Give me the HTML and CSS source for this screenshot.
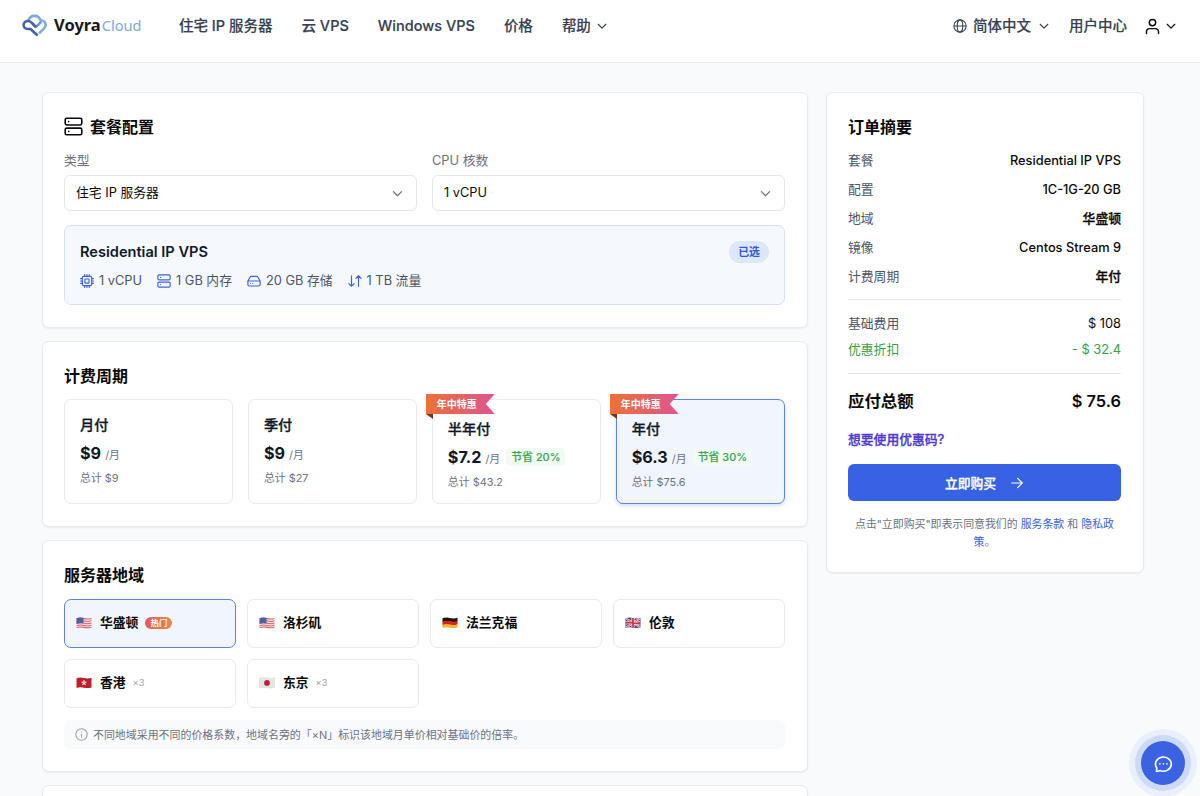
FILE: index.html
```html
<!DOCTYPE html>
<html lang="zh-CN">
<head>
    <meta charset="UTF-8">
    <meta name="viewport" content="width=device-width, initial-scale=1.0">
    <title>VoyraCloud</title>
    <link rel="stylesheet" href="styles.css">
</head>
<body>

    <!-- Shared icons -->
    <svg class="sprite" xmlns="http://www.w3.org/2000/svg">
        <symbol id="chevron" viewBox="0 0 24 24"><path d="m5.500 9 6.500 6.500L18.500 9"/></symbol>
        <symbol id="server" viewBox="0 0 24 24">
            <rect x="1.500" y="1.500" width="21" height="8.500" rx="2"/>
            <rect x="1.500" y="14" width="21" height="8.500" rx="2"/>
            <path d="M6 5.800h.01M6 18.200h.01"/>
        </symbol>
        <symbol id="flag-us" viewBox="0 0 16 12">
            <path d="M.5 1.200Q4 0 8 1t7.500-.2v9.600Q12 11.600 8 10.700T.5 11z" fill="#f3e9ec"/>
            <path d="M.5 1.800Q4 .6 8 1.600t7.500-.2M.5 4.200Q4 3 8 4t7.500-.2M.5 6.500Q4 5.300 8 6.300t7.500-.2M.5 8.700Q4 7.500 8 8.500t7.500-.2M.5 10.600Q4 9.500 8 10.400t7.500-.2" fill="none" stroke="#d9606c" stroke-width="1.100"/>
            <path d="M.5 1.200Q4 0 7.500.9v5.400Q4 5.400.5 6.800z" fill="#4a63a8"/>
        </symbol>
        <symbol id="flag-de" viewBox="0 0 16 12">
            <path d="M.5 1.200Q4 0 8 1t7.500-.2v4Q12 5.500 8 4.600T.5 5z" fill="#1d1513"/>
            <path d="M.5 4.500Q4 3.300 8 4.300t7.500-.2v3.500Q12 8.800 8 7.900T.5 8.200z" fill="#d3231c"/>
            <path d="M.5 7.800Q4 6.600 8 7.600t7.500-.2v3Q12 11.600 8 10.700T.5 11z" fill="#f5b52e"/>
        </symbol>
        <symbol id="flag-gb" viewBox="0 0 16 12">
            <path d="M.5 1.200Q4 0 8 1t7.500-.2v9.600Q12 11.600 8 10.700T.5 11z" fill="#3f4b86"/>
            <path d="M1 1.500 15 10.200M1 10.500 15 1.300" stroke="#efe6ea" stroke-width="2"/>
            <path d="M1 1.500 15 10.200M1 10.500 15 1.300" stroke="#cf4256" stroke-width=".8"/>
            <path d="M8 1v9.700M.5 6Q4 5 8 6t7.500-.4" fill="none" stroke="#efe6ea" stroke-width="3.200"/>
            <path d="M8 1v9.700M.5 6Q4 5 8 6t7.500-.4" fill="none" stroke="#cf3448" stroke-width="1.800"/>
        </symbol>
        <symbol id="flag-hk" viewBox="0 0 16 12">
            <path d="M.5 1.200Q4 0 8 1t7.500-.2v9.600Q12 11.600 8 10.700T.5 11z" fill="#b9222c"/>
            <g fill="#f6dfe0">
                <ellipse cx="8" cy="4.400" rx=".7" ry="1.300"/>
                <ellipse cx="8" cy="4.400" rx=".7" ry="1.300" transform="rotate(72 8 5.900)"/>
                <ellipse cx="8" cy="4.400" rx=".7" ry="1.300" transform="rotate(144 8 5.900)"/>
                <ellipse cx="8" cy="4.400" rx=".7" ry="1.300" transform="rotate(216 8 5.900)"/>
                <ellipse cx="8" cy="4.400" rx=".7" ry="1.300" transform="rotate(288 8 5.900)"/>
            </g>
        </symbol>
        <symbol id="flag-jp" viewBox="0 0 16 12">
            <path d="M.5 1.200Q4 0 8 1t7.500-.2v9.600Q12 11.600 8 10.700T.5 11z" fill="#e6e6e4" stroke="#d0d0ce" stroke-width=".4"/>
            <circle cx="8" cy="5.900" r="2.900" fill="#c3203d"/>
        </symbol>
    </svg>

    <header class="header">
        <a class="logo" href="#">
            <svg class="logo-mark" viewBox="0 0 26 24" fill="none" stroke-width="2.700" stroke-linejoin="round">
                <path d="M6.500 7.200C7.600 3.800 10.200 2 13 2c3 0 5.300 1.800 6.200 4.500C22.600 6.600 24.700 8.800 24.700 11.300c0 2-.9 3.100-2.200 4.400L17.700 20.200" stroke="#7fa9dc"/>
                <path d="M10.400 9.400l4 4.200 5.600-5.700" stroke="#6b95d2"/>
                <path d="M14.300 13.500 10 9C8.700 7.800 7.700 7.300 6.200 7.300 3.600 7.300 1.600 9.100 1.600 11.400c0 2.500 2 4.200 4.400 4.200h2.800L16.300 22.500" stroke="#4560a8"/>
            </svg>
            <span class="logo-text">Voyra<span>Cloud</span></span>
        </a>
        <nav class="nav">
            <a href="#">住宅 IP 服务器</a>
            <a href="#">云 VPS</a>
            <a href="#">Windows VPS</a>
            <a href="#">价格</a>
            <a href="#">帮助 <svg class="icon caret"><use href="#chevron"/></svg></a>
        </nav>
        <div class="tools">
            <a class="lang" href="#">
                <svg class="icon globe" viewBox="0 0 24 24"><circle cx="12" cy="12" r="10.500"/><ellipse cx="12" cy="12" rx="4.800" ry="10.500"/><path d="M1.500 12h21"/></svg>
                简体中文
                <svg class="icon caret"><use href="#chevron"/></svg>
            </a>
            <a class="center-link" href="#">用户中心</a>
            <a class="account" href="#">
                <svg class="icon user" viewBox="0 0 24 24"><circle cx="12" cy="6.500" r="4.500"/><path d="M3.500 22v-2.500a4.500 4.500 0 0 1 4.500-4.500h8a4.500 4.500 0 0 1 4.500 4.500V22"/></svg>
                <svg class="icon caret"><use href="#chevron"/></svg>
            </a>
        </div>
    </header>

    <main class="main">
        <div class="config">

            <!-- Plan -->
            <section class="card plan-card">
                <h2><svg class="icon title-icon"><use href="#server"/></svg>套餐配置</h2>
                <div class="fields">
                    <div class="field">
                        <label>类型</label>
                        <div class="select">住宅 IP 服务器<svg class="icon"><use href="#chevron"/></svg></div>
                    </div>
                    <div class="field">
                        <label>CPU 核数</label>
                        <div class="select">1 vCPU<svg class="icon"><use href="#chevron"/></svg></div>
                    </div>
                </div>
                <div class="plan">
                    <div class="plan-head">
                        <h3>Residential IP VPS</h3>
                        <span class="chosen">已选</span>
                    </div>
                    <ul class="specs">
                        <li>
                            <svg class="icon" viewBox="0 0 24 24"><rect x="4" y="4" width="16" height="16" rx="2"/><rect x="8.500" y="8.500" width="7" height="7" rx="1"/><path d="M8 4V1M12 4V1M16 4V1M8 23v-3M12 23v-3M16 23v-3M4 8H1M4 12H1M4 16H1M23 8h-3M23 12h-3M23 16h-3"/></svg>
                            1 vCPU
                        </li>
                        <li><svg class="icon"><use href="#server"/></svg>1 GB 内存</li>
                        <li>
                            <svg class="icon" viewBox="0 0 24 24"><path d="M22.500 12h-21M5.500 5.100 1.500 12v6a2.500 2.500 0 0 0 2.500 2.500h16a2.500 2.500 0 0 0 2.500-2.500v-6l-4-6.900A2 2 0 0 0 16.800 4H7.200a2 2 0 0 0-1.700 1.100zM6 16h.01M10 16h.01"/></svg>
                            20 GB 存储
                        </li>
                        <li>
                            <svg class="icon" viewBox="0 0 24 24"><path d="M6 3v18M1.500 16.500 6 21l4.500-4.500M18 21V3M13.500 7.500 18 3l4.500 4.500"/></svg>
                            1 TB 流量
                        </li>
                    </ul>
                </div>
            </section>

            <!-- Billing cycle -->
            <section class="card">
                <h2>计费周期</h2>
                <div class="cycles">
                    <div class="cycle">
                        <h4>月付</h4>
                        <div class="price"><b>$9</b><small>/月</small></div>
                        <p>总计 $9</p>
                    </div>
                    <div class="cycle">
                        <h4>季付</h4>
                        <div class="price"><b>$9</b><small>/月</small></div>
                        <p>总计 $27</p>
                    </div>
                    <div class="cycle promo">
                        <span class="ribbon">年中特惠</span>
                        <h4>半年付</h4>
                        <div class="price"><b>$7.2</b><small>/月</small><span class="save">节省 20%</span></div>
                        <p>总计 $43.2</p>
                    </div>
                    <div class="cycle promo selected">
                        <span class="ribbon">年中特惠</span>
                        <h4>年付</h4>
                        <div class="price"><b>$6.3</b><small>/月</small><span class="save">节省 30%</span></div>
                        <p>总计 $75.6</p>
                    </div>
                </div>
            </section>

            <!-- Region -->
            <section class="card">
                <h2>服务器地域</h2>
                <div class="regions">
                    <div class="region selected"><svg class="flag"><use href="#flag-us"/></svg>华盛顿<span class="hot">热门</span></div>
                    <div class="region"><svg class="flag"><use href="#flag-us"/></svg>洛杉矶</div>
                    <div class="region"><svg class="flag"><use href="#flag-de"/></svg>法兰克福</div>
                    <div class="region"><svg class="flag"><use href="#flag-gb"/></svg>伦敦</div>
                    <div class="region"><svg class="flag"><use href="#flag-hk"/></svg>香港<span class="rate">×3</span></div>
                    <div class="region"><svg class="flag"><use href="#flag-jp"/></svg>东京<span class="rate">×3</span></div>
                </div>
                <div class="note">
                    <svg class="icon" viewBox="0 0 24 24"><circle cx="12" cy="12" r="10.500"/><path d="M12 17v-5.500M12 7.500h.01"/></svg>
                    不同地域采用不同的价格系数，地域名旁的「×N」标识该地域月单价相对基础价的倍率。
                </div>
            </section>

            <section class="card next-card"></section>
        </div>

        <!-- Order summary -->
        <aside class="card summary">
            <h2>订单摘要</h2>
            <dl class="details">
                <div><dt>套餐</dt><dd>Residential IP VPS</dd></div>
                <div><dt>配置</dt><dd>1C-1G-20 GB</dd></div>
                <div><dt>地域</dt><dd class="cjk">华盛顿</dd></div>
                <div><dt>镜像</dt><dd>Centos Stream 9</dd></div>
                <div><dt>计费周期</dt><dd class="cjk">年付</dd></div>
            </dl>
            <dl class="fees">
                <div><dt>基础费用</dt><dd>$ 108</dd></div>
                <div class="discount"><dt>优惠折扣</dt><dd>- $ 32.4</dd></div>
            </dl>
            <div class="total"><span>应付总额</span><span>$ 75.6</span></div>
            <a class="coupon" href="#">想要使用优惠码?</a>
            <button class="buy" type="button">
                立即购买
                <svg class="icon" viewBox="0 0 24 24"><path d="M3 12h18M13 4l8 8-8 8"/></svg>
            </button>
            <p class="terms">点击"立即购买"即表示同意我们的 <a href="#">服务条款</a> 和 <a href="#">隐私政策</a>。</p>
        </aside>
    </main>

    <!-- Chat button -->
    <button class="chat" type="button">
        <svg class="icon" viewBox="0 0 24 24"><path d="M3.600 22 4.200 17.800A10 9 0 1 1 8.500 21z"/><path d="M8 12.500h.01M12.500 12.500h.01M17 12.500h.01"/></svg>
    </button>

</body>
</html>
```
FILE: styles.css
```css
* {
    box-sizing: border-box;
}

body {
    margin: 0;
    height: 796px;
    overflow: hidden;
    background-color: #f9fafc;
    color: #0a0a0a;
    font-family: Inter, "Noto Sans CJK SC", sans-serif;
    font-size: 12.8px;
    line-height: 18px;
}

h2, h3, h4, p, ul, dl, dd {
    margin: 0;
    padding: 0;
}

a {
    color: inherit;
    text-decoration: none;
}

button {
    border: none;
    padding: 0;
    font-family: inherit;
    cursor: pointer;
}

.sprite {
    display: none;
}

.icon {
    flex: none;
    fill: none;
    stroke: currentColor;
    stroke-width: 2;
    stroke-linecap: round;
    stroke-linejoin: round;
}

/* Header */
.header {
    display: flex;
    align-items: flex-start;
    height: 63px;
    padding: 12px 22px 0 22px;
    background-color: #fff;
    border-bottom: 1px solid #e8eaed;
    color: #364153;
    font-size: 14.5px;
    font-weight: 500;
    line-height: 28px;
}

.nav, .tools {
    -webkit-text-stroke: 0.15px currentColor;
}

.logo {
    display: flex;
    align-items: center;
    width: 157px;
}

.logo-mark {
    width: 25px;
    height: 23px;
    margin-right: 7px;
}

.logo-text {
    font-family: "Noto Sans", "Open Sans", sans-serif;
    font-size: 16.5px;
    font-weight: 700;
    line-height: 26px;
    color: #1c1717;
}

.logo-text span {
    margin-left: 1px;
    font-size: 14.6px;
    font-weight: 400;
    color: #7fa8d8;
}

.nav {
    display: flex;
    gap: 29px;
}

.nav a, .tools a {
    display: flex;
    align-items: center;
}

.caret {
    width: 14px;
    height: 14px;
}

.nav .caret {
    margin-left: 4px;
}

.tools {
    display: flex;
    margin-left: auto;
}

.globe {
    width: 14px;
    height: 14px;
    margin-right: 6px;
    stroke-width: 1.8;
}

.lang .caret {
    margin-left: 6px;
}

.center-link {
    margin-left: 18px;
}

.account {
    margin-left: 17px;
    color: #0a0a0a;
}

.user {
    width: 17px;
    height: 17px;
    margin-right: 3px;
}

/* Layout */
.main {
    display: grid;
    grid-template-columns: 766px 318px;
    gap: 18px;
    align-items: start;
    padding: 29px 0 0 42px;
}

.config {
    display: flex;
    flex-direction: column;
    gap: 13px;
}

.card {
    padding: 22px 22px 22px 21px;
    background-color: #fff;
    border: 1px solid #e8eaed;
    border-radius: 7px;
    box-shadow: 0 1px 2px rgba(0, 0, 0, 0.06);
}

.card h2 {
    display: flex;
    align-items: center;
    height: 25px;
    padding-bottom: 2px;
    font-size: 16px;
    font-weight: 600;
}

.title-icon {
    width: 19px;
    height: 19px;
    margin-right: 7px;
}

.next-card {
    height: 60px;
}

/* Plan */
.plan-card {
    height: 236px;
}

.fields {
    display: grid;
    grid-template-columns: 1fr 1fr;
    gap: 15px;
    margin-top: 12px;
}

.field label {
    display: block;
    margin-bottom: 5px;
    color: #6a7282;
}

.select {
    display: flex;
    align-items: center;
    justify-content: space-between;
    height: 36px;
    padding: 0 11px;
    border: 1px solid #e5e7eb;
    border-radius: 6px;
}

.select .icon {
    width: 15px;
    height: 15px;
    color: #737373;
}

.plan {
    height: 80px;
    margin-top: 14px;
    padding: 15px 15px;
    background-color: #f5f9fe;
    border: 1px solid #d3e1f7;
    border-radius: 7px;
}

.plan-head {
    display: flex;
    align-items: center;
    justify-content: space-between;
    height: 22px;
}

.plan h3 {
    font-size: 14.6px;
    font-weight: 600;
    color: #101828;
}

.chosen {
    padding: 2px 9px;
    border-radius: 11px;
    background-color: #dbe8fc;
    color: #2f5adf;
    font-size: 10.9px;
    font-weight: 600;
}

.specs {
    display: flex;
    gap: 15px;
    margin-top: 9px;
    list-style: none;
    color: #4a5565;
}

.specs li {
    display: flex;
    align-items: center;
    gap: 5px;
}

.specs .icon {
    width: 14px;
    height: 14px;
    color: #3b63e0;
}

/* Billing cycle */
.cycles {
    display: grid;
    grid-template-columns: repeat(4, 1fr);
    gap: 14.6px;
    margin-top: 10px;
}

.cycle {
    position: relative;
    height: 105px;
    padding: 15px 15px 0;
    border: 1px solid #e8eaed;
    border-radius: 7px;
}

.cycle.promo {
    padding-top: 19px;
}

.cycle h4 {
    font-size: 14.2px;
    font-weight: 500;
    line-height: 20px;
    color: #101828;
    -webkit-text-stroke: 0.3px currentColor;
}

.price {
    display: flex;
    align-items: baseline;
    margin-top: 6px;
    line-height: 24px;
}

.price b {
    font-size: 16.2px;
    font-weight: 700;
    color: #101828;
}

.price small {
    margin-left: 4px;
    font-size: 10.9px;
    color: #6a7282;
}

.cycle p {
    margin-top: 3px;
    font-size: 10.9px;
    line-height: 16px;
    color: #6a7282;
}

.save {
    align-self: center;
    margin: -2px 0 0 6px;
    padding: 0 5px;
    border-radius: 4px;
    background-color: #f0fcf4;
    color: #3fa455;
    font-size: 10.9px;
    font-weight: 500;
    line-height: 18px;
    -webkit-text-stroke: 0.15px currentColor;
}

.cycle.selected, .region.selected {
    background-color: #f0f5fe;
    border-color: #5b83e4;
}

.cycle.selected {
    box-shadow: 0 2px 4px rgba(43, 90, 200, 0.2);
}

.ribbon {
    position: absolute;
    top: -6px;
    left: -7px;
    width: 69px;
    height: 20px;
    padding-left: 11px;
    background: linear-gradient(90deg, #ea7235, #de5590);
    clip-path: polygon(0 0, 100% 0, 60px 50%, 100% 100%, 0 100%);
    color: #fff;
    font-size: 10px;
    font-weight: 700;
    line-height: 20px;
    white-space: nowrap;
}

/* folded end of the ribbon */
.promo::before {
    content: "";
    position: absolute;
    top: 14px;
    left: -7px;
    border-top: 5px solid #7c3414;
    border-left: 7px solid transparent;
}

/* Region */
.regions {
    display: grid;
    grid-template-columns: repeat(4, 1fr);
    gap: 11px;
    margin-top: 11px;
}

.region {
    display: flex;
    align-items: center;
    height: 49px;
    padding: 0 0 1px 11px;
    border: 1px solid #e8eaed;
    border-radius: 7px;
    font-weight: 600;
}

.flag {
    width: 16px;
    height: 12px;
    margin-right: 8px;
}

.hot {
    margin-left: 7px;
    padding: 0 5px;
    border-radius: 6px;
    background: linear-gradient(90deg, #ea5465, #ef8a3c);
    color: #fff;
    font-size: 8.5px;
    line-height: 12px;
}

.rate {
    margin-left: 7px;
    font-size: 9.2px;
    font-weight: 400;
    color: #99a1af;
}

.note {
    display: flex;
    align-items: center;
    height: 29px;
    margin-top: 12px;
    padding-left: 11px;
    border-radius: 6px;
    background-color: #f9fafc;
    color: #6a7282;
    font-size: 10.95px;
}

.note .icon {
    width: 13px;
    height: 13px;
    margin-right: 5px;
    color: #99a1af;
}

/* Order summary */
.summary {
    height: 481px;
}

.details {
    display: flex;
    flex-direction: column;
    gap: 11px;
    margin-top: 12px;
    padding-bottom: 13px;
    border-bottom: 1px solid #e5e7eb;
}

.details div, .fees div, .total {
    display: flex;
    justify-content: space-between;
}

.details dt, .fees dt {
    color: #4a5565;
}

.details dd {
    font-weight: 500;
}

.details .cjk {
    -webkit-text-stroke: 0.3px currentColor;
}

.fees {
    display: flex;
    flex-direction: column;
    gap: 8px;
    padding: 15px 0 14px;
    border-bottom: 1px solid #e5e7eb;
}

.fees .discount, .fees .discount dt {
    color: #35a04a;
}

.total {
    margin-top: 15px;
    font-size: 16.4px;
    font-weight: 600;
    line-height: 25px;
}

.coupon {
    display: block;
    margin-top: 17px;
    color: #4f39d0;
    font-weight: 500;
    -webkit-text-stroke: 0.3px currentColor;
}

.buy {
    display: flex;
    align-items: center;
    justify-content: center;
    gap: 14px;
    width: 100%;
    height: 37px;
    margin-top: 15px;
    border-radius: 6px;
    background-color: #3662e3;
    color: #fff;
    font-size: 12.8px;
    font-weight: 500;
    -webkit-text-stroke: 0.3px currentColor;
}

.buy .icon {
    width: 14px;
    height: 14px;
}

.terms {
    margin-top: 14px;
    text-align: center;
    font-size: 10.9px;
    color: #6a7282;
}

.terms a {
    color: #3662e3;
}

/* Chat button */
.chat {
    position: fixed;
    right: 15px;
    bottom: 11px;
    display: flex;
    align-items: center;
    justify-content: center;
    width: 44px;
    height: 44px;
    border-radius: 50%;
    background-color: #3b62e0;
    box-shadow: 0 0 0 6px #ccdaf6, 0 0 0 12px #e9f0fb;
    color: #fff;
}

.chat .icon {
    width: 20px;
    height: 19px;
}
```
